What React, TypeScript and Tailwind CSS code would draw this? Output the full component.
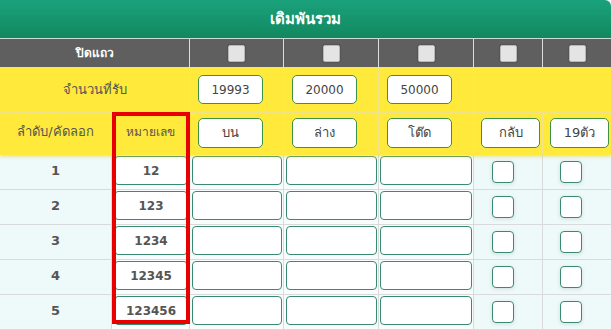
import React from "react";

const font = { fontFamily: '"DejaVu Sans", "Noto Sans", "Liberation Sans", sans-serif' };

function GrayBox() {
  return (
    <div className="w-[17px] h-[17px] rounded-[2px] bg-[#e4e4e4] border border-[#b8b8b8] shadow-[0_0_2px_rgba(0,0,0,0.35)]" />
  );
}

function TopInput({ v }: { v: string }) {
  return (
    <div className="w-[65px] h-[29px] rounded-[5px] bg-white border border-[#3f8f45] flex items-center justify-center text-[12px] text-[#444]">
      {v}
    </div>
  );
}

function Btn({ v, w }: { v: string; w: string }) {
  return (
    <div className={`${w} h-[30px] rounded-[5px] bg-white border border-[#3f8f45] flex items-center justify-center text-[13px] text-[#444]`}>
      {v}
    </div>
  );
}

function WideInput() {
  return <div className="h-[29px] rounded-[4px] bg-white border border-[#3a8a72]" />;
}

function Check() {
  return (
    <div className="w-[22px] h-[22px] rounded-[4px] bg-white border border-[#3a8a72] shadow-[0_1px_4px_rgba(0,0,0,0.12)]" />
  );
}

const nums = ["12", "123", "1234", "12345", "123456"];

export default function App() {
  return (
    <div className="w-[611px] h-[330px] overflow-hidden bg-white relative" style={font}>
      {/* title */}
      <div className="h-[39px] rounded-tr-[6px] bg-gradient-to-b from-[#1aa27c] to-[#12885f] border-b border-[#cfdcd6] flex items-center justify-center text-white font-bold text-[15px]">
        เดิมพันรวม
      </div>

      {/* close row */}
      <div className="grid grid-cols-[111px_78px_94px_95px_95px_69px_69px] h-[28px] bg-[#5f5f5f]">
        <div className="col-span-2 flex items-center justify-center text-white font-bold text-[12px]">ปิดแถว</div>
        <div className="border-l border-[#dcdcdc] flex items-center justify-center"><GrayBox /></div>
        <div className="border-l border-[#dcdcdc] flex items-center justify-center"><GrayBox /></div>
        <div className="border-l border-[#dcdcdc] flex items-center justify-center"><GrayBox /></div>
        <div className="border-l border-[#dcdcdc] flex items-center justify-center"><GrayBox /></div>
        <div className="border-l border-[#dcdcdc] flex items-center justify-center"><GrayBox /></div>
      </div>

      {/* amount row */}
      <div className="grid grid-cols-[111px_78px_94px_95px_95px_69px_69px] h-[46px] bg-[#ffe93a] border-b border-[#f1e48e]">
        <div className="col-span-2 flex items-center justify-center text-[13px] text-[#555]">จำนวนที่รับ</div>
        <div className="border-l border-[#f1e48e] pl-[8px] pt-[8px]"><TopInput v="19993" /></div>
        <div className="border-l border-[#f1e48e] pl-[8px] pt-[8px]"><TopInput v="20000" /></div>
        <div className="border-l border-[#f1e48e] pl-[8px] pt-[8px]"><TopInput v="50000" /></div>
        <div className="col-span-2 border-l border-[#f1e48e]" />
      </div>

      {/* header row */}
      <div className="grid grid-cols-[111px_78px_94px_95px_95px_69px_69px] h-[42px] bg-[#ffe93a] shadow-[0_2px_3px_rgba(230,210,60,0.5)] relative z-[1]">
        <div className="flex items-center justify-center text-[13px] text-[#555] pb-[4px]">ลำดับ/คัดลอก</div>
        <div className="border-l border-[#f1e48e] flex items-center justify-center text-[12px] text-[#555] pb-[4px]">หมายเลข</div>
        <div className="border-l border-[#f1e48e] pl-[8px] pt-[5px]"><Btn v="บน" w="w-[65px]" /></div>
        <div className="border-l border-[#f1e48e] pl-[8px] pt-[5px]"><Btn v="ล่าง" w="w-[65px]" /></div>
        <div className="border-l border-[#f1e48e] pl-[8px] pt-[5px]"><Btn v="โต๊ด" w="w-[65px]" /></div>
        <div className="border-l border-[#f1e48e] pl-[7px] pt-[5px]"><Btn v="กลับ" w="w-[59px]" /></div>
        <div className="border-l border-[#f1e48e] pl-[7px] pt-[5px]"><Btn v="19ตัว" w="w-[59px]" /></div>
      </div>

      {/* data rows */}
      {nums.map((n, i) => (
        <div
          key={n}
          className="grid grid-cols-[111px_78px_94px_95px_95px_69px_69px] h-[35px] border-b border-[#dadada] bg-[#eefafa]"
        >
          <div className="flex items-center justify-center font-bold text-[13px] text-[#555] pb-[3px]">{i + 1}</div>
          <div className="border-l border-[#dadada] bg-[#f8fcfc] pl-[3px] pr-[2px] pt-[1px]">
            <div className="h-[29px] rounded-[3px] bg-white border border-[#3a8a72] flex items-center justify-center font-bold text-[12px] text-[#555]">
              {n}
            </div>
          </div>
          <div className="border-l border-[#dadada] bg-[#f8fcfc] pl-[2px] pr-[1px] pt-[1px]"><WideInput /></div>
          <div className="border-l border-[#dadada] bg-[#f8fcfc] pl-[2px] pr-[1px] pt-[1px]"><WideInput /></div>
          <div className="border-l border-[#dadada] bg-[#f8fcfc] pl-[1px] pr-[1px] pt-[1px]"><WideInput /></div>
          <div className="border-l border-[#dadada] pl-[18px] pt-[6px]"><Check /></div>
          <div className="border-l border-[#dadada] pl-[17px] pt-[6px]"><Check /></div>
        </div>
      ))}

      {/* red highlight */}
      <div className="absolute left-[112px] top-[112px] w-[78px] h-[212px] border-4 border-[#e80000] z-10 pointer-events-none" />
    </div>
  );
}
